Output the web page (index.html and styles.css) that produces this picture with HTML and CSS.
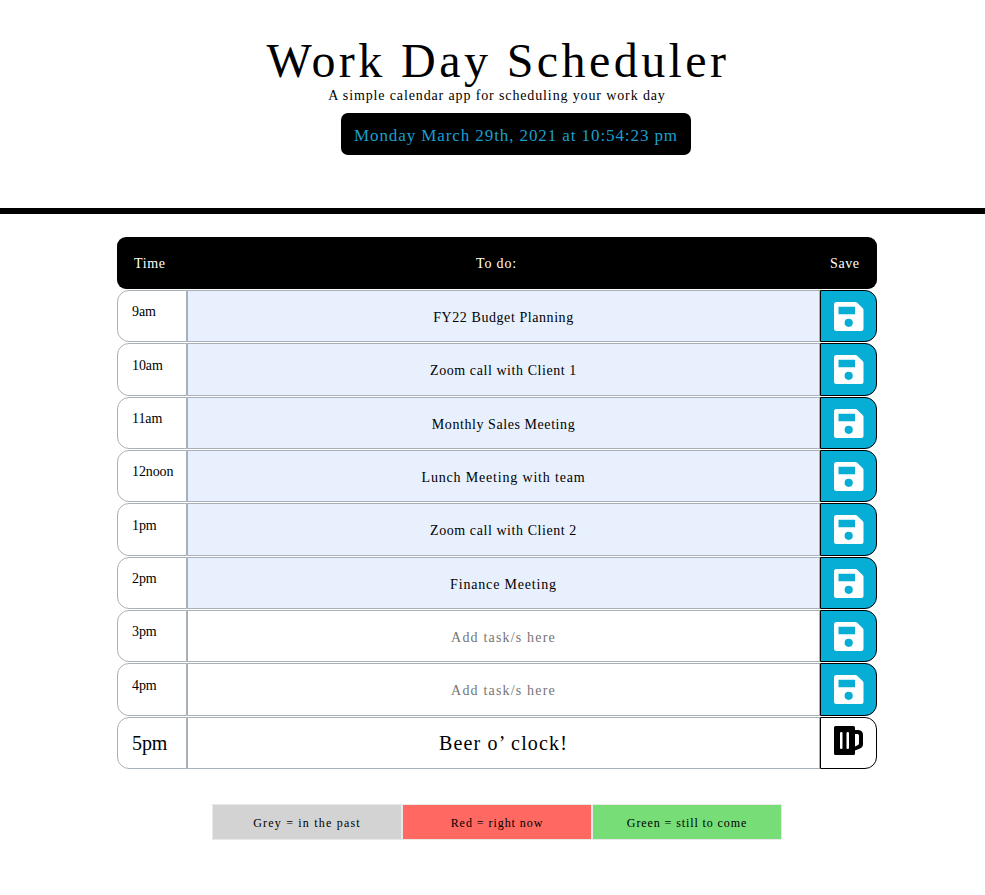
FILE: index.html
```html
<!DOCTYPE html>
<html lang="en">
<head>
<meta charset="utf-8">
<title>Work Day Scheduler</title>
<link rel="stylesheet" href="styles.css">
</head>
<body>
<svg width="0" height="0" class="defs" aria-hidden="true">
  <symbol id="save" viewBox="0 0 30 30"><path fill-rule="evenodd" d="M2.500 0H21.500Q22.500 0 23.200 .7L28.800 6.300Q29.500 7 29.500 8V26.500Q29.500 29 27 29H2.500Q0 29 0 26.500V2.500Q0 0 2.500 0ZM4.500 4.700V12.200H21V4.700ZM14.700 16.700A4.100 4.100 0 1 0 14.700 24.900A4.100 4.100 0 1 0 14.700 16.700Z"/></symbol>
  <symbol id="beer" viewBox="0 0 30 30"><path fill-rule="evenodd" d="M1.5 0H19.5Q21 0 21 1.5V4H24.5Q29 4.5 29 9V18Q29 21 26 22.5L21 24.5V27.5Q21 29 19.5 29H1.5Q0 29 0 27.5V1.5Q0 0 1.5 0ZM21 8V20.5L24 19Q25 18.500 25 17V9.500Q25 8 23.500 8ZM6 7V22Q6 23 7.250 23Q8.500 23 8.500 22V7Q8.500 6 7.250 6Q6 6 6 7ZM12.500 7V22Q12.500 23 13.750 23Q15 23 15 22V7Q15 6 13.750 6Q12.500 6 12.500 7Z"/></symbol>
</svg>
<header class="top">
  <h1>Work Day Scheduler</h1>
  <p class="lead">A simple calendar app for scheduling your work day</p>
  <div class="clock">Monday March 29th, 2021 at 10:54:23 pm</div>
</header>
<main class="planner">
  <div class="row head"><div class="time">Time</div><div class="todo">To do:</div><div class="save">Save</div></div>
  <div class="row"><div class="time">9am</div><div class="todo filled">FY22 Budget Planning</div><div class="save"><svg><use href="#save"/></svg></div></div>
  <div class="row"><div class="time">10am</div><div class="todo filled">Zoom call with Client 1</div><div class="save"><svg><use href="#save"/></svg></div></div>
  <div class="row"><div class="time">11am</div><div class="todo filled">Monthly Sales Meeting</div><div class="save"><svg><use href="#save"/></svg></div></div>
  <div class="row"><div class="time">12noon</div><div class="todo filled wide">Lunch Meeting with team</div><div class="save"><svg><use href="#save"/></svg></div></div>
  <div class="row"><div class="time">1pm</div><div class="todo filled">Zoom call with Client 2</div><div class="save"><svg><use href="#save"/></svg></div></div>
  <div class="row"><div class="time">2pm</div><div class="todo filled wide">Finance Meeting</div><div class="save"><svg><use href="#save"/></svg></div></div>
  <div class="row"><div class="time">3pm</div><div class="todo empty">Add task/s here</div><div class="save"><svg><use href="#save"/></svg></div></div>
  <div class="row"><div class="time">4pm</div><div class="todo empty">Add task/s here</div><div class="save"><svg><use href="#save"/></svg></div></div>
  <div class="row beer"><div class="time">5pm</div><div class="todo">Beer o’ clock!</div><div class="save"><svg><use href="#beer"/></svg></div></div>
</main>
<footer class="legend"><div class="past">Grey = in the past</div><div class="now">Red = right now</div><div class="future">Green = still to come</div></footer>
</body>
</html>
```
FILE: styles.css
```css
* { box-sizing: border-box; }
body { margin: 0; background: #fff; color: #000; font: 14px/20px "Liberation Serif", serif; letter-spacing: .6px; }
.defs { display: block; }
.top { height: 214px; padding-top: 33px; border-bottom: 6px solid #000; text-align: center; padding-left: 11px; }
h1 { margin: 0; font-size: 48px; line-height: 56px; font-weight: 400; letter-spacing: 3.42px; }
.lead { margin: -3px 0 0 -2px; line-height: 20px; letter-spacing: .87px; }
.clock { width: 350px; height: 42px; margin: 7px 0 0 330px; padding-top: 2px; border-radius: 7px; background: #000; color: #1a9fce; font-size: 17px; line-height: 42px; letter-spacing: .91px; white-space: nowrap; }
.planner { width: 760px; margin: 22.7px 0 0 117px; display: flex; flex-direction: column; gap: 1.04px; }
.row { display: grid; grid-template-columns: 70px 633px 57px; height: 52.3px; }
.time { border: 1px solid #a9b1b8; border-radius: 12px 0 0 12px; padding: 11.4px 0 0 14px; letter-spacing: -.1px; }
.todo { border: 1px solid #a9b1b8; display: flex; align-items: center; justify-content: center; padding-top: 3.7px; letter-spacing: .57px; }
.filled { background: #e8f0fe; }
.wide { letter-spacing: .82px; }
.empty { color: #757575; letter-spacing: 1.18px; }
.save { border: 1px solid #000; border-radius: 0 12px 12px 0; background: #06aed5; padding: 11px 0 0 13px; color: #fff; }
.save svg { display: block; width: 30px; height: 30px; fill: currentColor; }
.head { background: #000; color: #fff; border-radius: 9px; }
.head .time, .head .todo, .head .save { border: 0; background: none; padding-top: 17px; letter-spacing: .6px; }
.head .time { padding-left: 17px; }
.head .todo { align-items: flex-start; padding-right: 14px; letter-spacing: .8px; }
.head .save { padding-left: 10px; }
.beer .time { font-size: 20px; padding-top: 15px; }
.beer .todo { font-size: 20px; padding-top: 0; letter-spacing: 1.15px; }
.beer .save { background: #fff; color: #000; padding-top: 8px; }
.legend { width: 570px; margin: 35.2px 0 0 212px; display: grid; grid-template-columns: repeat(3, 1fr); font-size: 12px; line-height: 33px; text-align: center; }
.legend div { height: 36px; padding-top: 2px; border: 1px solid #e8e8e8; }
.past { background: #d3d3d3; letter-spacing: 1.2px; }
.now { background: #ff6961; letter-spacing: .95px; }
.future { background: #77dd77; letter-spacing: .9px; }
```
